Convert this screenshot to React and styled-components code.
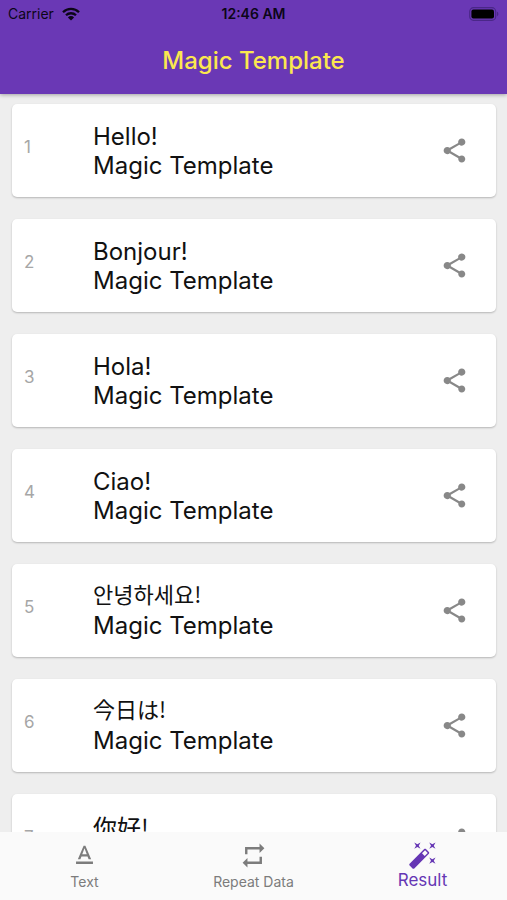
import React from 'react';
import styled, { createGlobalStyle } from 'styled-components';
import { MdShare, MdTextFormat, MdRepeat } from 'react-icons/md';

const GlobalStyle = createGlobalStyle`
  * {
    box-sizing: border-box;
  }

  body {
    margin: 0;
    background: #eeeeee;
    font-family: Inter, "Noto Sans CJK KR", sans-serif;
  }
`;

const Screen = styled.div`
  display: flex;
  flex-direction: column;
  height: 100vh;
`;

const Header = styled.header`
  position: relative;
  flex: none;
  background: #6a38b5;
  box-shadow: 0 1px 4px rgba(0, 0, 0, 0.32);
`;

const StatusBar = styled.div`
  display: grid;
  grid-template-columns: 1fr auto 1fr;
  align-items: center;
  height: 27px;
  padding: 0 8px;
  color: #0c0618;
  font-size: 14px;
`;

const Carrier = styled.div`
  display: flex;
  align-items: center;
  gap: 8px;
`;

const Clock = styled.span`
  font-weight: 600;
`;

const Battery = styled.svg`
  justify-self: end;
`;

const Title = styled.h1`
  margin: 0;
  height: 67px;
  line-height: 67px;
  text-align: center;
  color: #fbe74f;
  font-size: 24px;
  font-weight: 500;
`;

const List = styled.ul`
  flex: 1;
  min-height: 0;
  margin: 0;
  padding: 10px 11px 10px 12px;
  display: flex;
  flex-direction: column;
  gap: 22px;
  list-style: none;
  overflow-y: auto;
  scrollbar-width: none;
`;

const Card = styled.li`
  flex: none;
  display: flex;
  align-items: center;
  padding: 18px 25px 17px 12px;
  background: #fff;
  border-radius: 5px;
  box-shadow: 0 1px 2px rgba(0, 0, 0, 0.24);
`;

const Index = styled.span`
  width: 69px;
  padding-bottom: 9px;
  color: #a6a6a6;
  font-size: 17px;
`;

const Message = styled.div`
  flex: 1;
  color: #111;
  font-size: 24px;
  line-height: 29px;
`;

const Line = styled.div`
  height: 29px;
  font-family: ${({ $font }) => ($font ? `"${$font}", sans-serif` : 'inherit')};
  font-size: ${({ $size }) => ($size ? `${$size}px` : 'inherit')};
  line-height: ${({ $size }) => ($size ? '22px' : 'inherit')};
`;

const ShareButton = styled.button`
  display: flex;
  padding: 0 2px 2px;
  border: none;
  background: none;
  color: #888;
  cursor: pointer;
`;

const TabBar = styled.nav`
  flex: none;
  display: grid;
  grid-template-columns: repeat(3, 1fr);
  height: 68px;
  background: #fafafa;
`;

const Tab = styled.button`
  display: flex;
  flex-direction: column;
  align-items: center;
  justify-content: flex-end;
  gap: ${({ $active }) => ($active ? 0 : 2)}px;
  padding: 0 0 ${({ $active }) => ($active ? 10 : 8)}px;
  border: none;
  background: none;
  color: ${({ $active }) => ($active ? '#6536b4' : '#7c7c7c')};
  font-family: inherit;
  font-size: ${({ $active }) => ($active ? 17 : 14)}px;
  line-height: 20px;
  cursor: pointer;
`;

const WifiIcon = () => (
  <svg width="18" height="14" viewBox="0 0 18 14" aria-hidden="true">
    <g fill="none" stroke="currentColor" strokeWidth="2.3">
      <path d="M1 5.2a11.4 11.4 0 0 1 16 0" />
      <path d="M4 8.3a7.1 7.1 0 0 1 10 0" />
    </g>
    <path fill="currentColor" d="M9 13.6 5.9 10.4a4.4 4.4 0 0 1 6.2 0z" />
  </svg>
);

const BatteryIcon = () => (
  <Battery width="30" height="14" viewBox="0 0 30 14" aria-label="Battery full">
    <rect x="0.7" y="0.7" width="26" height="12.6" rx="3.8" fill="none" stroke="#4a2788" strokeWidth="1.2" />
    <rect x="2.4" y="2.4" width="22.6" height="9.2" rx="2" fill="#000" />
    <path d="M28 4.8c1.8.6 1.8 3.8 0 4.4z" fill="#4a2788" />
  </Battery>
);

const WandIcon = () => (
  <svg width="30" height="30" viewBox="0 0 24 24" fill="currentColor" aria-hidden="true">
    <path d="M7.5 5.6 5 7l1.4-2.5L5 2l2.5 1.4L10 2 8.6 4.5 10 7 7.5 5.6m12 9.8L22 14l-1.4 2.5L22 19l-2.5-1.4L17 19l1.4-2.5L17 14l2.5 1.4M22 2l-1.4 2.5L22 7l-2.5-1.4L17 7l1.4-2.5L17 2l2.5 1.4L22 2m-8.66 10.78 2.44-2.44-2.12-2.12-2.44 2.44 2.12 2.12m1.03-5.49 2.34 2.34c.39.37.39 1.02 0 1.41L5.04 22.71c-.39.39-1.04.39-1.41 0l-2.34-2.34c-.39-.37-.39-1.02 0-1.41L12.96 7.29c.39-.39 1.04-.39 1.41 0z" />
  </svg>
);

const results = [
  { text: 'Hello!', lang: 'en' },
  { text: 'Bonjour!', lang: 'fr' },
  { text: 'Hola!', lang: 'es' },
  { text: 'Ciao!', lang: 'it' },
  { text: '안녕하세요!', lang: 'ko', font: 'Noto Sans CJK KR', size: 22 },
  { text: '今日は!', lang: 'ja', font: 'Noto Sans CJK JP', size: 22 },
  { text: '你好!', lang: 'zh', font: 'Noto Sans CJK SC' },
];

const App = () => {
  return (
    <Screen>
      <GlobalStyle />
      <Header>
        <StatusBar>
          <Carrier>
            Carrier
            <WifiIcon />
          </Carrier>
          <Clock>12:46 AM</Clock>
          <BatteryIcon />
        </StatusBar>
        <Title>Magic Template</Title>
      </Header>
      <List>
        {results.map((item, i) => (
          <Card key={item.lang}>
            <Index>{i + 1}</Index>
            <Message>
              <Line lang={item.lang} $font={item.font} $size={item.size}>
                {item.text}
              </Line>
              <Line>Magic Template</Line>
            </Message>
            <ShareButton type="button" aria-label={`Share ${item.text}`}>
              <MdShare size={29} />
            </ShareButton>
          </Card>
        ))}
      </List>
      <TabBar>
        <Tab type="button">
          <MdTextFormat size={29} />
          Text
        </Tab>
        <Tab type="button">
          <MdRepeat size={29} />
          Repeat Data
        </Tab>
        <Tab type="button" $active>
          <WandIcon />
          Result
        </Tab>
      </TabBar>
    </Screen>
  );
};

export default App;
